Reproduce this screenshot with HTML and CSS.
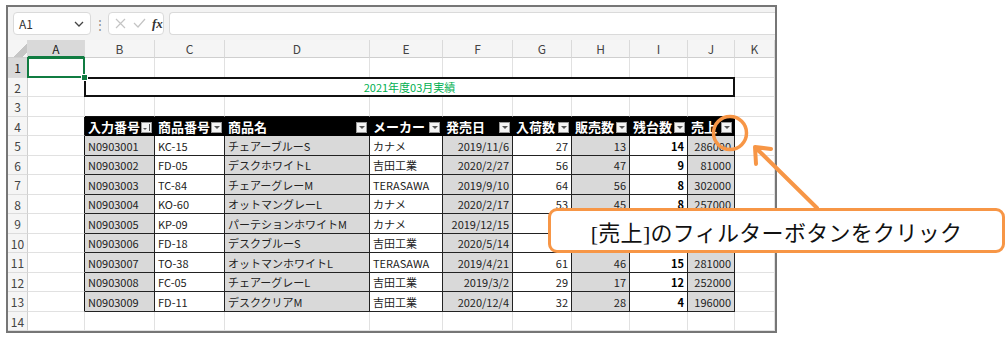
FILE: index.html
```html
<!DOCTYPE html>
<html lang="ja">
<head>
    <meta charset="UTF-8">
    <meta name="viewport" content="width=device-width, initial-scale=1.0">
    <title>売上フィルター</title>
    <link rel="stylesheet" href="styles.css">
</head>
<body>
    <div class="excel">
        <div class="toolbar">
            <div class="namebox">
                <span>A1</span>
                <svg width="10" height="6" viewBox="0 0 10 6"><path d="M1 1 L5 5 L9 1" fill="none" stroke="#444" stroke-width="1.3"/></svg>
            </div>
            <span class="dots">⋮</span>
            <div class="fxbox">
                <svg width="11" height="11" viewBox="0 0 11 11"><path d="M1 1 L10 10 M10 1 L1 10" stroke="#c4c4c4" stroke-width="1.2"/></svg>
                <svg width="13" height="11" viewBox="0 0 13 11"><path d="M1 5 L5 9 L12 1" fill="none" stroke="#c4c4c4" stroke-width="1.2"/></svg>
                <span class="fx">fx</span>
            </div>
            <div class="formula"></div>
        </div>
        <div class="sheet" id="sheet"></div>
    </div>

    <!-- callout over the sheet -->
    <div class="callout">[売上]のフィルターボタンをクリック</div>
    <svg class="marks" width="1008" height="338" viewBox="0 0 1008 338">
        <circle cx="730" cy="133" r="16.5" fill="none" stroke="#f79646" stroke-width="3.5"/>
        <path d="M817 208 L756 148 M756 164 L755 147 L771 149" fill="none" stroke="#f79646" stroke-width="4" stroke-linecap="round" stroke-linejoin="round"/>
    </svg>

    <script>
        const sheet = document.getElementById("sheet");
        const letters = ["A", "B", "C", "D", "E", "F", "G", "H", "I", "J", "K"];
        const heads = ["入力番号", "商品番号", "商品名", "メーカー", "発売日", "入荷数", "販売数", "残台数", "売上"];
        // rows 9 and 10 have their numbers under the callout, so they stay empty
        const data = [
            ["N0903001", "KC-15", "チェアーブルーS", "カナメ", "2019/11/6", 27, 13, 14, 286000],
            ["N0903002", "FD-05", "デスクホワイトL", "吉田工業", "2020/2/27", 56, 47, 9, 81000],
            ["N0903003", "TC-84", "チェアーグレーM", "TERASAWA", "2019/9/10", 64, 56, 8, 302000],
            ["N0903004", "KO-60", "オットマングレーL", "カナメ", "2020/2/17", 53, 45, 8, 257000],
            ["N0903005", "KP-09", "パーテションホワイトM", "カナメ", "2019/12/15", "", "", "", ""],
            ["N0903006", "FD-18", "デスクブルーS", "吉田工業", "2020/5/14", "", "", "", ""],
            ["N0903007", "TO-38", "オットマンホワイトL", "TERASAWA", "2019/4/21", 61, 46, 15, 281000],
            ["N0903008", "FC-05", "チェアーグレーL", "吉田工業", "2019/3/2", 29, 17, 12, 252000],
            ["N0903009", "FD-11", "デスククリアM", "吉田工業", "2020/12/4", 32, 28, 4, 196000]
        ];

        function cell(cls, text) {
            const div = document.createElement("div");
            div.className = cls;
            if (text !== undefined) div.textContent = text;
            sheet.appendChild(div);
            return div;
        }

        // column header row
        cell("corner");
        letters.forEach((l, i) => cell(i === 0 ? "colhead active" : "colhead", l));

        for (let r = 1; r <= 14; r++) {
            cell(r === 1 ? "rowhead active" : "rowhead", r);

            if (r === 2) {
                cell("c");
                cell("c title", "2021年度03月実績");
                cell("c");
                continue;
            }

            for (let c = 0; c < letters.length; c++) {
                const inTable = c >= 1 && c <= 9;
                let cls = "c";
                if (r === 1 && c === 0) cls += " selected";
                if (r === 3 && inTable) cls += " above";
                if (r >= 4 && r <= 13 && c === 0) cls += " edge";

                if (r === 4 && inTable) {
                    const h = cell("c head");
                    const label = document.createElement("span");
                    label.textContent = heads[c - 1];
                    const btn = document.createElement("span");
                    btn.className = c === 1 ? "fbtn sorted" : "fbtn";
                    h.append(label, btn);
                } else if (r >= 5 && r <= 13 && inTable) {
                    const i = c - 1;
                    let dc = "c t";
                    if (i % 2 === 0) dc += " gray";
                    if (i >= 4) dc += " num";
                    if (i === 7) dc += " bold";
                    cell(dc, data[r - 5][i]);
                } else {
                    cell(cls);
                }
            }
        }
    </script>
</body>
</html>
```

FILE: styles.css
```css
body {
    margin: 0;
    padding: 5px 0 0 6px;
    background: white;
    font-family: "Noto Sans CJK JP", "Noto Sans", sans-serif;
    position: relative;
    width: 1002px;
    height: 333px;
    overflow: hidden;
}

.excel {
    width: 767px;
    border: 2px solid #767676;
    background: white;
}

.toolbar {
    display: flex;
    align-items: center;
    height: 33px;
    padding-left: 5px;
    background: #f3f3f3;
    box-sizing: border-box;
}

.namebox {
    display: flex;
    align-items: center;
    justify-content: space-between;
    width: 78px;
    height: 23px;
    box-sizing: border-box;
    padding: 0 6px 0 5px;
    background: white;
    border: 1px solid #dadada;
    border-radius: 4px;
    font-size: 12px;
    color: #333;
}

.dots {
    width: 17px;
    text-align: center;
    color: #888;
    font-size: 12px;
}

.fxbox {
    display: flex;
    align-items: center;
    gap: 7px;
    width: 56px;
    height: 23px;
    box-sizing: border-box;
    padding-left: 6px;
    background: white;
    border: 1px solid #dadada;
    border-radius: 4px;
}

.fx {
    font-family: "Liberation Serif", serif;
    font-style: italic;
    font-weight: bold;
    font-size: 13px;
    color: #333;
    margin-left: -1px;
}

.formula {
    flex: 1;
    height: 23px;
    margin-left: 5px;
    box-sizing: border-box;
    background: white;
    border: 1px solid #dadada;
    border-radius: 4px 0 0 4px;
    border-right: none;
}

.sheet {
    display: grid;
    grid-template-columns: 20px 57px 70px 70px 145px 73px 70px 59px 58px 58px 47px 40px;
    grid-template-rows: 18px repeat(7, 20px 19px);
    font-size: 11px;
    color: #222;
}

.sheet > div {
    box-sizing: border-box;
    border-right: 1px solid #e1e1e1;
    border-bottom: 1px solid #e1e1e1;
    display: flex;
    align-items: center;
    white-space: nowrap;
    overflow: hidden;
}

.corner {
    background: #f5f5f5 linear-gradient(135deg, transparent 62%, #c6c6c6 62%, #c6c6c6 88%, transparent 88%);
}

.sheet > .corner,
.sheet > .colhead {
    border-right-color: #dadada;
    border-bottom-color: #cfcfcf;
}

.colhead {
    justify-content: center;
    background: #f5f5f5;
    font-size: 12px;
    color: #444;
}

.rowhead {
    justify-content: center;
    background: #f5f5f5;
    font-size: 12px;
    color: #444;
}

.sheet > .rowhead {
    border-right-color: #cfcfcf;
    border-bottom-color: #dcdcdc;
}

.sheet > .colhead.active {
    background: #d9d9d9;
    border-bottom: 2px solid #107c41;
    color: #222;
}

.sheet > .rowhead.active {
    background: #d9d9d9;
    color: #222;
}

.selected {
    position: relative;
    overflow: visible !important;
}

.selected::after {
    content: "";
    position: absolute;
    left: -1px;
    top: -1px;
    right: -1px;
    bottom: -1px;
    border: 2px solid #107c41;
}

.selected::before {
    content: "";
    position: absolute;
    right: -4px;
    bottom: -4px;
    width: 5px;
    height: 5px;
    background: #107c41;
    border: 1px solid white;
    z-index: 2;
}

.sheet > .title {
    grid-column: 3 / 12;
    justify-content: center;
    border: 2px solid #111;
    margin: -1px 0 0 -1px;
    color: #00b050;
}

.sheet > .above {
    border-bottom-color: #111;
}

.sheet > .edge {
    border-right-color: #111;
}

.sheet > .head {
    background: #000;
    color: white;
    font-weight: bold;
    font-size: 13px;
    padding: 0 2px 0 3px;
    border-color: #000;
}

.fbtn {
    margin-left: auto;
    flex: none;
    width: 11px;
    height: 11px;
    margin-top: 3px;
    box-sizing: border-box;
    background: #f4f4f4;
    border: 1px solid #9a9a9a;
    position: relative;
}

.fbtn::after {
    content: "";
    position: absolute;
    left: 2px;
    top: 3px;
    border-left: 3px solid transparent;
    border-right: 3px solid transparent;
    border-top: 3px solid #555;
}

.fbtn.sorted::after {
    left: 1px;
    top: 5px;
    border-left-width: 2px;
    border-right-width: 2px;
    border-top-width: 2px;
}

.fbtn.sorted::before {
    content: "";
    position: absolute;
    right: 1px;
    top: 1px;
    width: 1px;
    height: 7px;
    background: #555;
}

.sheet > .t {
    padding: 0 3px;
    border-right-color: #222;
    border-bottom-color: #222;
    background: white;
}

.sheet > .t.gray {
    background: #d9d9d9;
}

.sheet > .num {
    justify-content: flex-end;
}

.sheet > .bold {
    font-weight: bold;
    color: #000;
}

.callout {
    position: absolute;
    left: 548px;
    top: 208px;
    width: 457px;
    height: 45px;
    box-sizing: border-box;
    border: 3px solid #f79646;
    border-radius: 9px;
    background: white;
    display: flex;
    align-items: center;
    justify-content: center;
    font-family: "Liberation Serif", "Noto Sans CJK JP", serif;
    font-size: 22px;
    letter-spacing: 0.3px;
    color: #111;
    padding-top: 1px;
}

.marks {
    position: absolute;
    left: 0;
    top: 0;
    pointer-events: none;
}
```
